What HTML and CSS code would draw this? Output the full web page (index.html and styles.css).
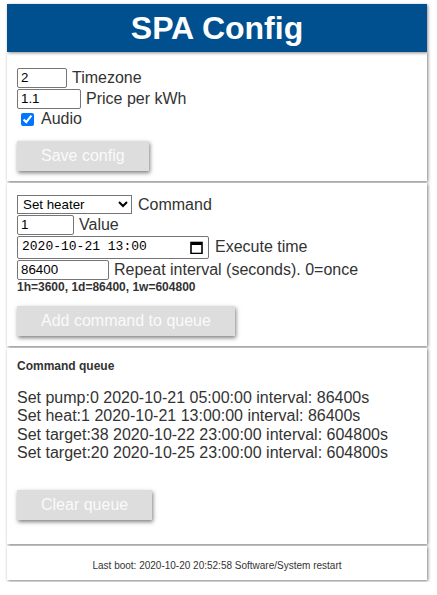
FILE: index.html
```html
<!DOCTYPE html>
<html lang="en">
<head>
<meta charset="utf-8">
<title>SPA Config</title>
<link rel="stylesheet" href="styles.css">
</head>
<body>
<div class="page">
  <header class="header">SPA Config</header>

  <section class="card card-config">
    <div class="row"><input class="field w-tz" type="text" value="2"><span>Timezone</span></div>
    <div class="row"><input class="field w-price" type="text" value="1.1"><span>Price per kWh</span></div>
    <div class="row row-check"><input class="check" type="checkbox" checked><span>Audio</span></div>
    <button class="btn">Save config</button>
  </section>

  <section class="card card-command">
    <div class="row row-select">
      <select class="select">
        <option>Set heater</option>
      </select><span>Command</span>
    </div>
    <div class="row"><input class="field w-value" type="text" value="1"><span>Value</span></div>
    <div class="row row-date">
      <div class="datebox">
        <span class="datetext">2020-10-21 13:00</span>
        <svg class="cal" width="13" height="13" viewBox="0 0 13 13" aria-hidden="true">
          <rect x="1" y="1.5" width="11" height="11" fill="none" stroke="#000" stroke-width="1.6"/>
          <rect x="1" y="1" width="11" height="3" fill="#000"/>
        </svg>
      </div><span>Execute time</span>
    </div>
    <div class="row"><input class="field w-repeat" type="text" value="86400"><span>Repeat interval (seconds). 0=once</span></div>
    <div class="hint">1h=3600, 1d=86400, 1w=604800</div>
    <button class="btn">Add command to queue</button>
  </section>

  <section class="card card-queue">
    <div class="queue-title">Command queue</div>
    <div class="queue">
      <div>Set pump:0 2020-10-21 05:00:00 interval: 86400s</div>
      <div>Set heat:1 2020-10-21 13:00:00 interval: 86400s</div>
      <div>Set target:38 2020-10-22 23:00:00 interval: 604800s</div>
      <div>Set target:20 2020-10-25 23:00:00 interval: 604800s</div>
    </div>
    <button class="btn btn-clear">Clear queue</button>
  </section>

  <footer class="card footer">Last boot: 2020-10-20 20:52:58 Software/System restart</footer>
</div>
</body>
</html>
```
FILE: styles.css
```css
html, body {
  margin: 0;
  padding: 0;
  background: #fff;
}

body {
  font-family: "Liberation Sans", Arial, sans-serif;
  font-size: 16px;
  color: #333;
}

.page {
  width: 420px;
  margin: 4px 0 0 7px;
}

.header {
  height: 48px;
  background: #00508f;
  color: #fff;
  font-weight: bold;
  font-size: 32px;
  line-height: 48px;
  text-align: center;
  box-shadow: 1px 1px 3px rgba(0, 0, 0, 0.45);
  position: relative;
  z-index: 1;
}

.card {
  background: #fff;
  box-shadow: 1px 1px 3px rgba(0, 0, 0, 0.5);
  margin-bottom: 2px;
  padding: 0 10px;
}

.card-config {
  padding-top: 15px;
  padding-bottom: 10px;
}

.card-command {
  padding-top: 12px;
  padding-bottom: 10px;
}

.card-queue {
  padding-top: 11px;
  padding-bottom: 24px;
}

.row {
  display: flex;
  align-items: center;
  gap: 5px;
  height: 21px;
  line-height: 18px;
}

.row-check {
  height: 20px;
}

.row-select {
  height: 19px;
  gap: 6px;
}

.row-date {
  height: 24px;
  gap: 6px;
}

.field {
  box-sizing: border-box;
  height: 20px;
  margin: 0;
  padding: 0 3px;
  border: 1px solid #767676;
  border-radius: 2px;
  font-family: "Liberation Sans", Arial, sans-serif;
  font-size: 13.33px;
  color: #000;
  background: #fff;
}

.w-tz { width: 50px; }
.w-price { width: 64px; }
.w-value { width: 57px; }
.w-repeat { width: 92px; }

.check {
  width: 13px;
  height: 13px;
  margin: 0 2px 0 4px;
}

.select {
  box-sizing: border-box;
  width: 115px;
  height: 19px;
  margin: 0;
  padding: 0 0 0 1px;
  font-family: "Liberation Sans", Arial, sans-serif;
  font-size: 13.33px;
  color: #000;
  border: 1px solid #767676;
  border-radius: 0;
  background: #fff;
}

.datebox {
  box-sizing: border-box;
  width: 192px;
  height: 23px;
  border: 1px solid #767676;
  border-radius: 2px;
  display: flex;
  align-items: center;
  justify-content: space-between;
  padding: 0 5px 0 4px;
  background: #fff;
}

.datetext {
  font-family: "Liberation Mono", "DejaVu Sans Mono", monospace;
  font-size: 13px;
  color: #000;
}

.cal {
  display: block;
}

.hint {
  font-size: 12px;
  font-weight: bold;
  line-height: 14px;
  height: 14px;
}

.btn {
  display: block;
  margin: 12px 0 0 0;
  height: 30px;
  padding: 0 24px;
  border: none;
  border-radius: 0;
  background: #dddddd;
  color: #fafafa;
  font-family: "Liberation Sans", Arial, sans-serif;
  font-size: 16px;
  box-shadow: 1px 2px 4px rgba(0, 0, 0, 0.5);
}

.queue-title {
  font-size: 12px;
  font-weight: bold;
  line-height: 15px;
}

.queue {
  margin-top: 15px;
  line-height: 18.4px;
}

.btn-clear {
  margin-top: 27px;
}

.footer {
  padding: 14px 0 8px;
  font-size: 10px;
  line-height: 12px;
  text-align: center;
}
```
